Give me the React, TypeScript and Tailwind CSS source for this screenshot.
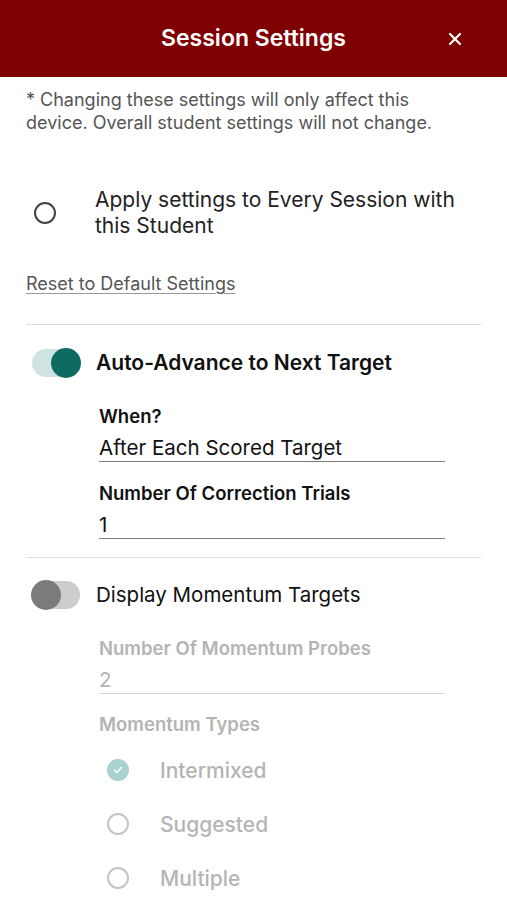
import { X } from "lucide-react"

function Toggle({ on }: { on: boolean }) {
  return (
    <div className={on ? "relative w-[48px] h-[28px] rounded-full bg-[#cfe4e2]" : "relative w-[48px] h-[28px] rounded-full bg-[#cdcdcd]"}>
      <div className={on ? "absolute right-[-1px] top-[-1px] w-[30px] h-[30px] rounded-full bg-[#0d6b62]" : "absolute left-[-1px] top-[-1px] w-[30px] h-[30px] rounded-full bg-[#7b7b7b]"} />
    </div>
  )
}

function Field({ label, value, muted }: { label: string; value: string; muted?: boolean }) {
  return (
    <div className="flex flex-col">
      <div className={muted ? "text-[18.5px] font-semibold text-[#b4b4b4] leading-[22px]" : "text-[18.5px] font-semibold text-[#111] leading-[22px]"}>{label}</div>
      <div className={muted ? "mt-[10px] pb-[2px] text-[20.5px] text-[#b4b4b4] leading-[22px] border-b border-[#d8d8d8] w-[346px]" : "mt-[10px] pb-[2px] text-[20.5px] text-[#111] leading-[22px] border-b border-[#7a7a7a] w-[346px]"}>{value}</div>
    </div>
  )
}

function TypeOption({ label, checked }: { label: string; checked?: boolean }) {
  return (
    <div className="flex items-center h-[54px]">
      <div className="w-[42px] pl-[8px]">
        {checked ? (
          <div className="w-[22px] h-[22px] rounded-full bg-[#a9d1cd] flex items-center justify-center">
            <svg width="12" height="12" viewBox="0 0 12 12" fill="none">
              <path d="M2.5 6.2l2.3 2.3 4.7-4.9" stroke="white" strokeWidth="1.6" strokeLinecap="round" strokeLinejoin="round" />
            </svg>
          </div>
        ) : (
          <div className="w-[22px] h-[22px] rounded-full border-[2px] border-[#c4c4c4]" />
        )}
      </div>
      <span className="ml-[19px] text-[21px] text-[#b4b4b4] font-medium">{label}</span>
    </div>
  )
}

export default function App() {
  return (
    <div className="w-[507px] min-h-[900px] bg-white font-['Inter',sans-serif] overflow-hidden">
      <header className="h-[77px] bg-[#7f0000] flex items-center justify-center relative">
        <h1 className="text-white text-[23px] font-semibold">Session Settings</h1>
        <X className="absolute right-[42px] top-[29px] text-white" size={20} strokeWidth={2.6} />
      </header>

      <div className="px-[26px]">
        <p className="mt-[11px] w-[440px] text-[18px] leading-[23px] text-[#555]">
          * Changing these settings will only affect this device. Overall student settings will not change.
        </p>

        <div className="mt-[53px] flex items-center">
          <div className="w-[22px] h-[22px] rounded-full border-[2px] border-[#444] ml-[8px] shrink-0" />
          <span className="ml-[39px] text-[21px] leading-[26px] text-[#222]">Apply settings to Every Session with this Student</span>
        </div>

        <div className="mt-[31px] text-[18px] text-[#555] underline underline-offset-[3px] decoration-[#999]">Reset to Default Settings</div>

        <div className="mt-[27px] border-t border-[#dcdcdc]" />

        <div className="mt-[22px] flex items-center">
          <div className="ml-[6px]"><Toggle on /></div>
          <span className="ml-[16px] text-[21px] font-semibold text-[#111]">Auto-Advance to Next Target</span>
        </div>
        <div className="ml-[73px] mt-[26px] flex flex-col gap-[20px]">
          <Field label="When?" value="After Each Scored Target" />
          <Field label="Number Of Correction Trials" value="1" />
        </div>

        <div className="mt-[18px] border-t border-[#dcdcdc]" />

        <div className="mt-[22px] flex items-center">
          <div className="ml-[6px]"><Toggle on={false} /></div>
          <span className="ml-[16px] text-[20.5px] text-[#111]">Display Momentum Targets</span>
        </div>
        <div className="ml-[73px] mt-[27px] flex flex-col">
          <Field label="Number Of Momentum Probes" value="2" muted />
          <div className="mt-[19px] text-[18.5px] font-semibold text-[#b4b4b4] leading-[22px]">Momentum Types</div>
          <div className="mt-[8px] flex flex-col">
            <TypeOption label="Intermixed" checked />
            <TypeOption label="Suggested" />
            <TypeOption label="Multiple" />
          </div>
        </div>
      </div>
    </div>
  )
}
